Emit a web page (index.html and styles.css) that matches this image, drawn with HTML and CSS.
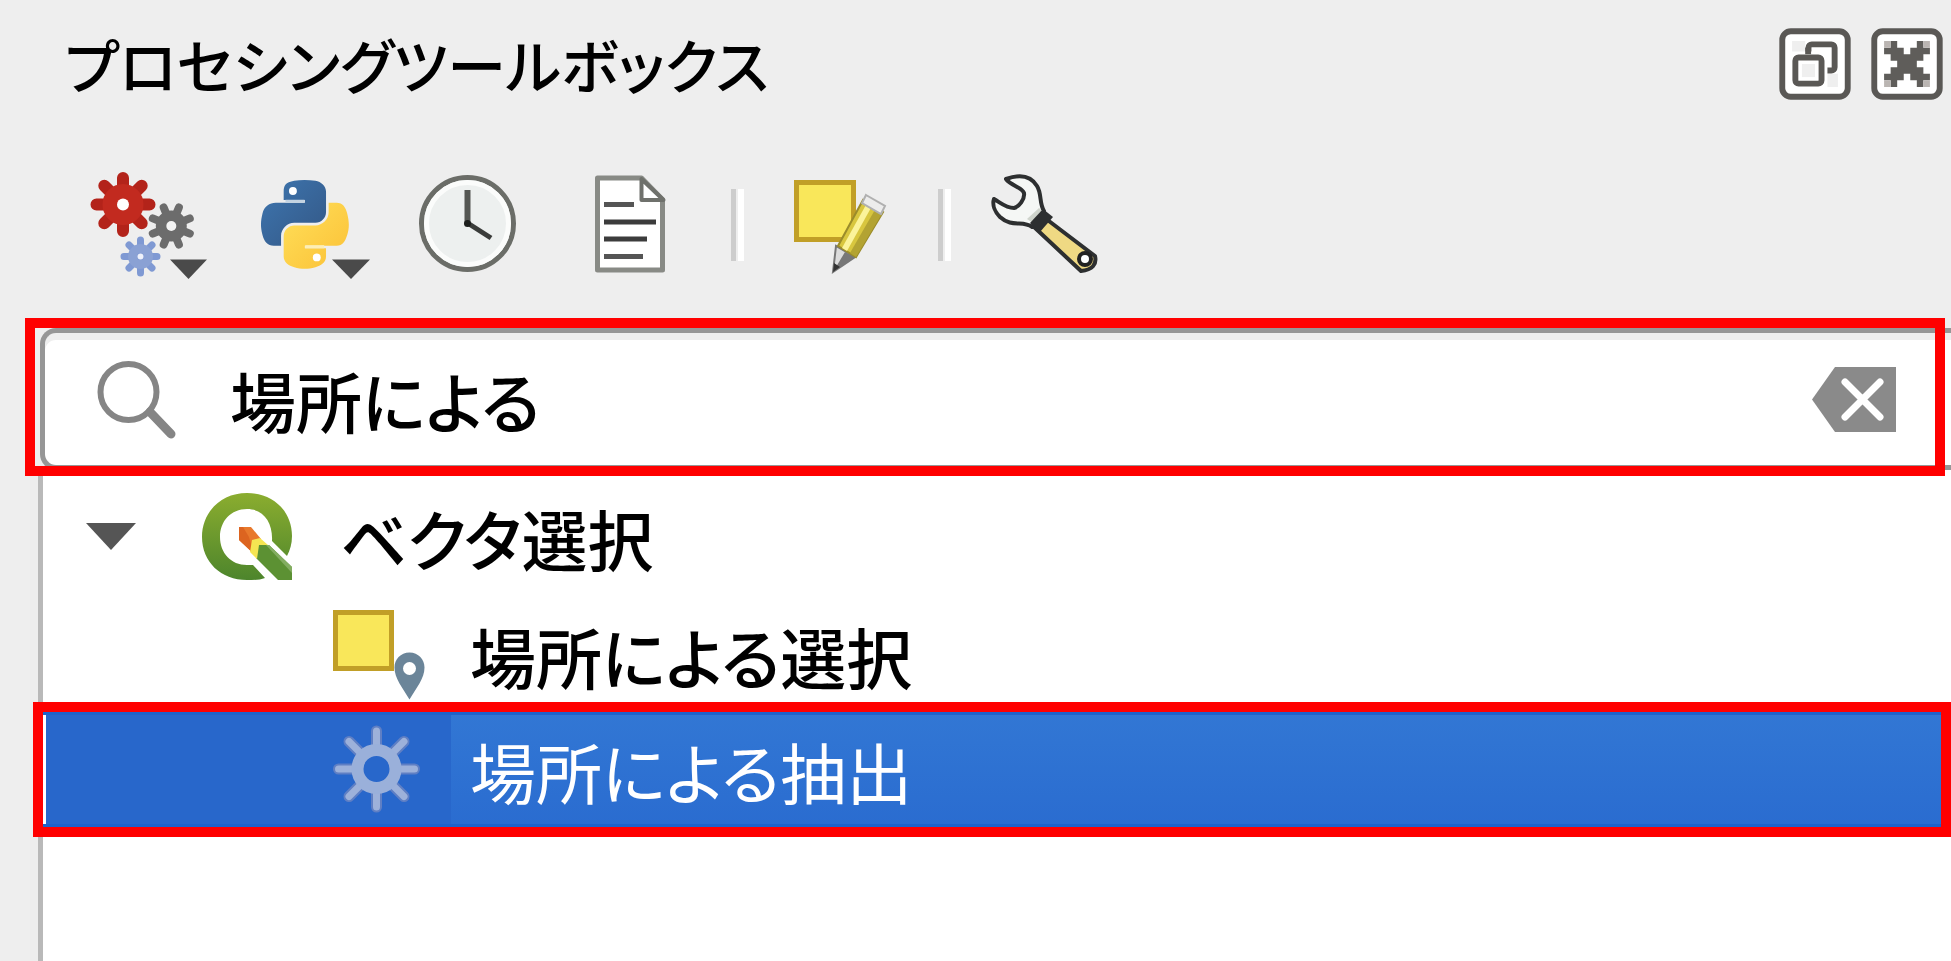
FILE: index.html
```html
<!DOCTYPE html>
<html lang="ja">
<head>
    <meta charset="UTF-8">
    <meta name="viewport" content="width=device-width, initial-scale=1.0">
    <title>プロセシングツールボックス</title>
    <link rel="stylesheet" href="styles.css">
</head>
<body>
    <div class="panel">
        <div class="title-bar">
            <h1>プロセシングツールボックス</h1>
            <button class="dock-button" type="button" aria-label="フロート">
                <svg viewBox="0 0 11 11">
                    <rect x=".5" y=".5" width="10" height="10" rx="1.300" fill="#fff" stroke="#5a5855" stroke-width=".9"/>
                    <path fill="#efefef" d="M2 2h7v7H2z"/>
                    <path fill="#fff" d="M4 2h5v5H4z"/>
                    <rect x="4.500" y="2.500" width="4" height="4" rx=".5" fill="#fff" stroke="#5a5855" stroke-width=".9"/>
                    <path fill="#fff" d="M1.600 3.600h5.800v5.800H1.600z"/>
                    <rect x="2.500" y="4.500" width="4" height="4" rx=".5" fill="#fff" stroke="#5a5855" stroke-width=".9"/>
                    <path fill="#efefef" d="M3.500 5.500h2v2h-2z"/>
                    <path fill="#5a5855" d="M4 3h.9v1H4z"/>
                </svg>
            </button>
            <button class="dock-button" type="button" aria-label="閉じる">
                <svg viewBox="0 0 11 11">
                    <rect x=".5" y=".5" width="10" height="10" rx="1.300" fill="#fff" stroke="#5a5855" stroke-width=".9"/>
                    <path fill="#5f5d5a" d="M3 2h1v1h1v1h1V3h1V2h1v1h1v1H8v1H7v1h1v1h1v1H8v1H7V8H6V7H5v1H4v1H3V8H2V7h1V6h1V5H3V4H2V3h1z"/>
                    <path fill="#bab5b2" d="M2 2h1v1H2zM8 2h1v1H8zM2 8h1v1H2zM8 8h1v1H8z"/>
                </svg>
            </button>
        </div>

        <div class="toolbar">
            <div class="tool-group">
                <button class="tool" type="button" aria-label="モデル">
                    <svg viewBox="90 170 120 110">
                        <g stroke="#b3231a" stroke-width="12" stroke-linecap="round">
                            <path d="M123 178v53M96.500 204.500h53M104.300 185.800l37.400 37.400M141.700 185.800l-37.400 37.400"/>
                            <circle cx="123" cy="204.500" r="13" fill="none" stroke="#c22a1f" stroke-width="15"/>
                        </g>
                        <circle cx="123" cy="204.500" r="6" fill="#fff"/>
                        <g stroke="#6c6c6c" stroke-width="8" stroke-linecap="round">
                            <path d="M163.700 207.500l15.200 37M178.900 207.500l-15.200 37M152.800 218.400l37 15.200M152.800 233.600l37-15.200"/>
                            <circle cx="171.300" cy="226" r="10" fill="none" stroke-width="11"/>
                        </g>
                        <circle cx="171.300" cy="226" r="5" fill="#f4f4f4"/>
                        <g stroke="#7f99d3" stroke-width="7" stroke-linecap="round">
                            <path d="M140.500 240v33M124 256.500h33M129 245l23 23M152 245l-23 23"/>
                            <circle cx="140.500" cy="256.500" r="8" fill="none" stroke="#8aa1d4" stroke-width="9"/>
                        </g>
                        <circle cx="140.500" cy="256.500" r="3" fill="#eef1fa"/>
                        <path d="M170 259.500h37l-18.500 19.500z" fill="#4a4a4a"/>
                    </svg>
                </button>
                <button class="tool" type="button" aria-label="スクリプト">
                    <svg viewBox="254 170 120 110">
                        <defs>
                            <linearGradient id="py-blue" x1="0" y1="0" x2="1" y2="1">
                                <stop offset="0" stop-color="#3e76b0"/>
                                <stop offset="1" stop-color="#335785"/>
                            </linearGradient>
                            <linearGradient id="py-yellow" x1="0" y1="0" x2="1" y2="1">
                                <stop offset="0" stop-color="#ffe05a"/>
                                <stop offset="1" stop-color="#fbc036"/>
                            </linearGradient>
                        </defs>
                        <g transform="translate(261 180) scale(.79)">
                            <path fill="url(#py-blue)" d="M54.920 0c-4.580.02-8.960.41-12.810 1.090C30.760 3.100 28.700 7.290 28.700 15.030v10.220h26.810v3.410H18.640c-7.790 0-14.620 4.680-16.750 13.590-2.460 10.210-2.570 16.590 0 27.250C3.800 77.440 8.360 83.090 16.160 83.090h9.220V70.840c0-8.850 7.660-16.660 16.750-16.660h26.780c7.450 0 13.410-6.140 13.410-13.630V15.030c0-7.270-6.130-12.730-13.410-13.940C64.280.33 59.500-.02 54.920 0z"/>
                            <path fill="url(#py-yellow)" d="M85.640 28.660v11.910c0 9.230-7.830 17-16.750 17H42.110c-7.340 0-13.410 6.280-13.410 13.630v25.530c0 7.270 6.320 11.540 13.410 13.630 8.490 2.500 16.630 2.950 26.780 0 6.750-1.950 13.410-5.890 13.410-13.630V86.500H55.520v-3.410h40.190c7.790 0 10.700-5.430 13.410-13.590 2.800-8.400 2.680-16.480 0-27.250-1.930-7.760-5.600-13.590-13.410-13.590z"/>
                            <path stroke="#c3d3e2" stroke-width="4" d="M31 27h24"/>
                            <path stroke="#fdeeb5" stroke-width="4" d="M56 84.500h24"/>
                            <circle cx="40.400" cy="14" r="5" fill="#fff"/>
                            <circle cx="70.600" cy="98" r="5" fill="#fff"/>
                        </g>
                        <path d="M332 259.500h38l-19 19.500z" fill="#4a4a4a"/>
                    </svg>
                </button>
                <button class="tool" type="button" aria-label="履歴">
                    <svg viewBox="418 170 120 110">
                        <circle cx="467.500" cy="223.500" r="46" fill="#edf0ef" stroke="#6b6d68" stroke-width="5"/>
                        <circle cx="467.500" cy="223.500" r="41" fill="none" stroke="#fbfcfb" stroke-width="5"/>
                        <path d="M467.500 190v34" fill="none" stroke="#555753" stroke-width="6"/>
                        <path d="M466 222l25 16" fill="none" stroke="#3a3c3a" stroke-width="5"/>
                        <circle cx="467.500" cy="223.500" r="3.500" fill="#1d1f1d"/>
                    </svg>
                </button>
                <button class="tool" type="button" aria-label="結果ビューア">
                    <svg viewBox="582 170 120 110">
                        <path d="M597.500 178h44l21 21.500V270h-65z" fill="#fff" stroke="#888a85" stroke-width="5" stroke-linejoin="round"/>
                        <path d="M641.500 179v21h22z" fill="#fff" stroke="#6f716c" stroke-width="4" stroke-linejoin="round"/>
                        <path d="M604 204.500h30M604 256.500h39" stroke="#555" stroke-width="5"/>
                        <path d="M604 222h52M604 239h43" stroke="#3c3c3c" stroke-width="5"/>
                    </svg>
                </button>
            </div>
            <span class="separator"></span>
            <button class="tool" type="button" aria-label="その場で編集">
                <svg viewBox="789 170 120 110">
                    <path d="M796.500 182.500h57v57h-57z" fill="#f9e75a" stroke="#c19f27" stroke-width="5"/>
                    <path d="M836 246l-3 26 22-15z" fill="#dcdcdc" stroke="#777" stroke-width="2"/>
                    <path d="M845 252l-12 20 22-15z" fill="#777"/>
                    <path d="M833 272l1-9 6 4z" fill="#333"/>
                    <path d="M863 200l-25 46 18 11 27-45z" fill="#d8c63e" stroke="#9b8c2a" stroke-width="2"/>
                    <path d="M867 203l-25 45 5 3 25-45z" fill="#fbf39a"/>
                    <path d="M876 208l-26 45 6 4 27-45z" fill="#b3a332"/>
                    <path d="M866 195l19 11-4 8-19-11z" fill="#ececec" stroke="#b0b0b0" stroke-width="2"/>
                </svg>
            </button>
            <span class="separator"></span>
            <button class="tool" type="button" aria-label="オプション">
                <svg viewBox="995 170 120 110">
                    <path d="M1040 215l54 41q3 13-14 15l-48-45z" fill="#efd983" stroke="#2d2f30" stroke-width="4" stroke-linejoin="round"/>
                    <path d="M1005 179c14-5 25-3 31 7 5 8 2 17 7 25l-12 16c-9-7-20 1-32-10-5-5-8-12-6-18 7 4 12 9 20 9 5-1 11-9 10-15-2-6-13-7-18-14z" fill="#f5f7f5" stroke="#2d2f30" stroke-width="4" stroke-linejoin="round"/>
                    <path d="M1038 208l4 4-10 11-6-4z" fill="#cfd4cc"/>
                    <path d="M1042 209l10 8-13 15-10-9z" fill="#2d2f30"/>
                    <circle cx="1084" cy="259" r="6" fill="#fff" stroke="#222" stroke-width="4"/>
                </svg>
            </button>
        </div>

        <div class="search marked">
            <label for="search" aria-label="検索">
                <svg class="search-icon" viewBox="95 358 80 80">
                    <circle cx="127.500" cy="391" r="28" fill="none" stroke="#858585" stroke-width="6"/>
                    <path d="M149 411l21 22" stroke="#858585" stroke-width="9" stroke-linecap="round"/>
                </svg>
            </label>
            <input type="text" id="search" value="場所による">
            <button class="clear" type="button" aria-label="クリア">
                <svg viewBox="0 0 84 65">
                    <path d="M0 32.500L23 0h61v65H23z" fill="#8a8a8a"/>
                    <path d="M33 15l35 35M68 15L33 50" stroke="#fff" stroke-width="7" stroke-linecap="round"/>
                </svg>
            </button>
        </div>

        <ul class="tree">
            <li class="row group">
                <svg class="expander" viewBox="0 0 50 27"><path d="M0 0h50L25 27z" fill="#555"/></svg>
                <svg class="qgis" viewBox="201 492 92 88">
                    <defs>
                        <linearGradient id="qgis-green" x1="0" y1="0" x2="0" y2="1">
                            <stop offset="0" stop-color="#8bad2f"/>
                            <stop offset="1" stop-color="#4d852c"/>
                        </linearGradient>
                    </defs>
                    <path fill="url(#qgis-green)" fill-rule="evenodd" d="M247 492c26 0 45 18 45 43 0 8-2 14-5 20l-15-15c1-18-8-32-25-32-16 0-27 12-27 28s11 28 27 28h6l12 13c-5 2-11 2-18 2-26 0-45-18-45-43s19-44 45-44z"/>
                    <path d="M257 544h12l23 22v13h-14l-22-22z" fill="#5c9133"/>
                    <path d="M266 544h3l23 22v6z" fill="#83ad60"/>
                    <path d="M239 526h12l10 12-7 15-15-14z" fill="#e8792c"/>
                    <path d="M239 526l4 0 6 10 5 17-15-14z" fill="#dc6420"/>
                    <path d="M260 537l8 7h-9l-2 14-7-7 2-12z" fill="#f5e552"/>
                </svg>
                <span>ベクタ選択</span>
            </li>
            <li class="row item">
                <svg class="item-icon" viewBox="331 601 96 106">
                    <path d="M335.500 611.500h56v56h-56z" fill="#f9e75a" stroke="#c19f27" stroke-width="5"/>
                    <path d="M409.500 651.500c9 0 15 7 15 15 0 11-8 20-15 32-7-12-15-21-15-32 0-8 6-15 15-15z" fill="#6b8599"/>
                    <circle cx="409.500" cy="667.500" r="6.500" fill="#fff"/>
                </svg>
                <span>場所による選択</span>
            </li>
            <li class="row item selected marked">
                <svg class="item-icon" viewBox="331 717 96 106">
                    <g fill="none" stroke="#5f7fc4" stroke-width="11" stroke-linecap="round">
                        <path d="M376.500 731v76M338.500 769h76M349 741.500l55 55M404 741.500l-55 55"/>
                    </g>
                    <g fill="none" stroke="#9db1da" stroke-width="7" stroke-linecap="round">
                        <path d="M376.500 731v76M338.500 769h76M349 741.500l55 55M404 741.500l-55 55"/>
                    </g>
                    <circle cx="376.500" cy="769" r="19" fill="#2867cb" stroke="#9ab0da" stroke-width="12"/>
                </svg>
                <span>場所による抽出</span>
            </li>
        </ul>
    </div>
</body>
</html>
```
FILE: styles.css
```css
* {
    box-sizing: border-box;
}

body {
    margin: 0;
    background: #eee;
    color: #000;
    font-family: "Noto Sans CJK JP", sans-serif;
    font-size: 66px;
    font-weight: 500;
    line-height: 98px;
    font-feature-settings: "palt";
    overflow-x: hidden;
}

svg {
    display: block;
    overflow: visible;
}

button {
    padding: 0;
    border: none;
    background: none;
    cursor: pointer;
}

.panel {
    display: flex;
    flex-direction: column;
    min-height: 100vh;
}

.title-bar {
    display: flex;
    align-items: center;
    gap: 20px;
    padding: 15px 8px 0 65px;
}

.title-bar h1 {
    flex: 1;
    margin: 0;
    font-size: 59px;
    font-weight: 500;
}

.dock-button svg {
    width: 72px;
    height: 72px;
}

.toolbar {
    display: flex;
    align-items: center;
    gap: 29px;
    margin-top: 57px;
    padding-left: 90px;
}

.tool-group {
    display: flex;
    gap: 44px;
}

.tool svg {
    width: 120px;
    height: 110px;
}

.separator {
    width: 13px;
    height: 72px;
    margin-right: 16px;
    border-left: 5px solid #cdcdcd;
    border-right: 6px solid #fff;
}

/* red highlight frame */
.marked {
    position: relative;
}

.marked::after {
    content: "";
    position: absolute;
    border: 10px solid #f00;
    pointer-events: none;
}

.search {
    display: flex;
    align-items: center;
    height: 142px;
    margin: 48px 0 0 40px;
    padding: 0 55px 0 51px;
    background: #fff;
    border: 5px solid #969696;
    border-right: none;
    border-radius: 16px 0 0 16px;
    box-shadow: inset 0 7px #eee;
}

.search.marked::after {
    inset: -15px 6px -11px -20px;
}

.search-icon {
    width: 80px;
    height: 80px;
}

.search input {
    flex: 1;
    min-width: 0;
    height: 98px;
    margin: 0 20px 0 54px;
    padding: 0;
    border: none;
    outline: none;
    background: transparent;
    color: inherit;
    font: inherit;
    font-feature-settings: inherit;
}

.clear svg {
    width: 84px;
    height: 65px;
}

.tree {
    flex: 1;
    margin: 0 0 0 38px;
    padding: 12px 0 0;
    list-style: none;
    background: #fff;
    border-left: 5px solid #b9b9b9;
}

.row {
    display: flex;
    align-items: center;
    height: 115px;
}

.group {
    padding: 0 0 6px 43px;
}

.expander {
    width: 50px;
    height: 27px;
}

.qgis {
    width: 92px;
    height: 88px;
    margin: 0 47px 0 65px;
}

.item {
    padding-left: 288px;
}

.item-icon {
    width: 96px;
    height: 106px;
    margin-right: 43px;
}

.selected {
    color: #fff;
    font-weight: 400;
    background: linear-gradient(to right, #fff 3px, #2867cb 3px, #2867cb 408px, transparent 408px),
                linear-gradient(#3277d4, #2a6cd0);
    box-shadow: inset 0 3px #1f62ca, inset 0 -3px #1f62ca;
}

.selected.marked::after {
    inset: -10px 0 -10px -10px;
}
```
